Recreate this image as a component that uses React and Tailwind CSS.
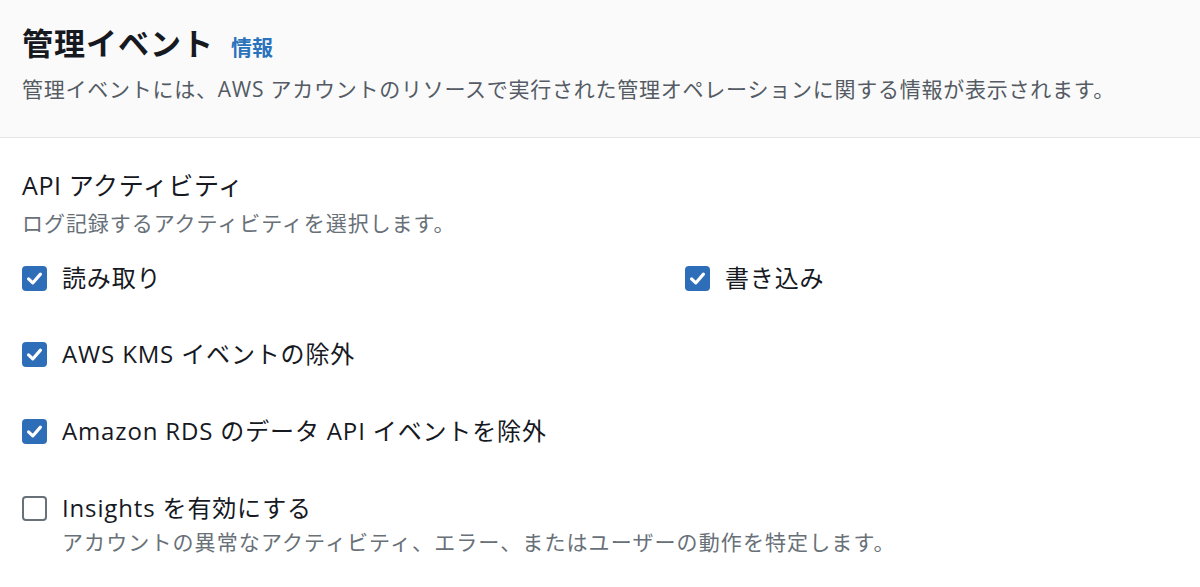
import { useState } from 'react';

const Checkbox = ({ checked, onChange }) => (
  <button
    type="button"
    onClick={onChange}
    className={
      checked
        ? 'w-[25px] h-[25px] shrink-0 rounded-[4px] bg-[#2e6db8] flex items-center justify-center'
        : 'w-[25px] h-[25px] shrink-0 rounded-[4px] border-2 border-[#687078] bg-white'
    }
  >
    {checked && (
      <svg viewBox="0 0 24 24" className="w-[19px] h-[19px]">
        <path
          d="M4.5 12.5 L9.8 17.6 L19.5 6.5"
          fill="none"
          stroke="white"
          strokeWidth="4"
          strokeLinecap="round"
          strokeLinejoin="round"
        />
      </svg>
    )}
  </button>
);

const Option = ({ label, checked, onChange, description }) => (
  <div>
    <label className="flex items-center gap-[15px] cursor-pointer">
      <Checkbox checked={checked} onChange={onChange} />
      <span className="text-[24px] leading-[32px] tracking-[0.85px] text-[#16191f]">{label}</span>
    </label>
    {description && (
      <p className="mt-[3px] pl-[40px] text-[21px] leading-[30px] tracking-[1.1px] text-[#687078]">
        {description}
      </p>
    )}
  </div>
);

export default function App() {
  const [opts, setOpts] = useState({
    read: true,
    write: true,
    kms: true,
    rds: true,
    insights: false,
  });

  const toggle = key => setOpts(o => ({ ...o, [key]: !o[key] }));

  return (
    <div
      className="w-[1200px] h-[587px] bg-white overflow-hidden"
      style={{ fontFamily: '"Open Sans", "Noto Sans CJK JP", sans-serif' }}
    >
      <header className="bg-[#fafafa] border-b border-[#e4e6e6] h-[138px] px-[22px] pt-[23px]">
        <div className="flex items-baseline gap-[17px]">
          <h2 className="text-[31px] leading-[40px] font-bold tracking-[1px] text-[#16191f]">
            管理イベント
          </h2>
          <a href="#" className="text-[21px] font-bold text-[#2a72bc]">
            情報
          </a>
        </div>
        <p className="mt-[10px] text-[21px] leading-[30px] tracking-[0.75px] text-[#545b64]">
          管理イベントには、AWS アカウントのリソースで実行された管理オペレーションに関する情報が表示されます。
        </p>
      </header>

      <section className="px-[22px] pt-[30px]">
        <h3 className="text-[25px] leading-[34px] tracking-[0.6px] text-[#16191f]">API アクティビティ</h3>
        <p className="mt-[6px] text-[21px] leading-[30px] tracking-[0.95px] text-[#687078]">
          ログ記録するアクティビティを選択します。
        </p>

        <div className="mt-[24px] grid grid-cols-[663px_1fr]">
          <Option label="読み取り" checked={opts.read} onChange={() => toggle('read')} />
          <Option label="書き込み" checked={opts.write} onChange={() => toggle('write')} />
        </div>

        <div className="mt-[44px] flex flex-col gap-[45px]">
          <Option label="AWS KMS イベントの除外" checked={opts.kms} onChange={() => toggle('kms')} />
          <Option
            label="Amazon RDS のデータ API イベントを除外"
            checked={opts.rds}
            onChange={() => toggle('rds')}
          />
          <Option
            label="Insights を有効にする"
            checked={opts.insights}
            onChange={() => toggle('insights')}
            description="アカウントの異常なアクティビティ、エラー、またはユーザーの動作を特定します。"
          />
        </div>
      </section>
    </div>
  );
}
